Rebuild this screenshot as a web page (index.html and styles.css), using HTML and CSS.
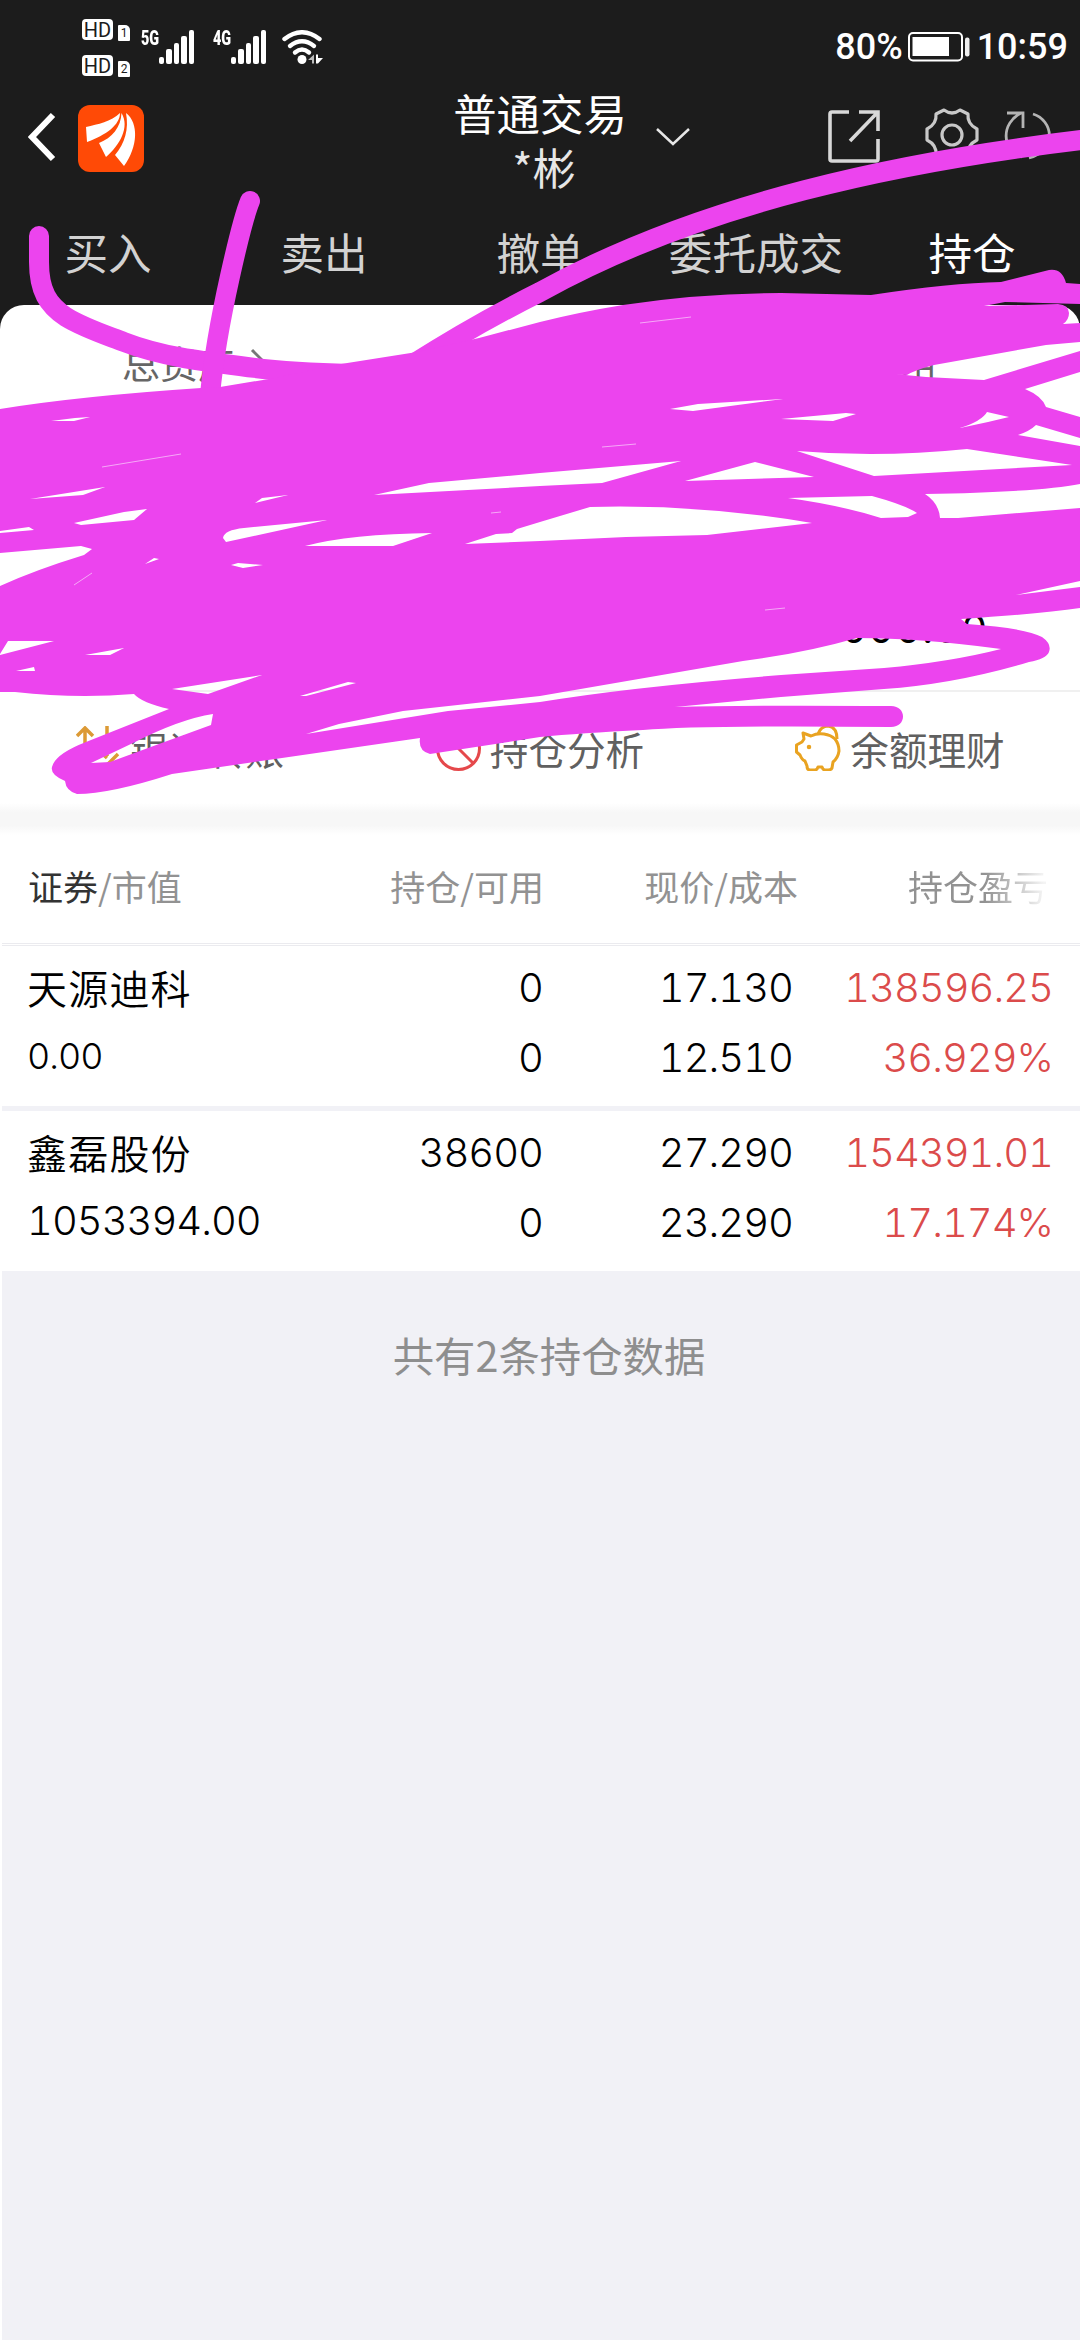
FILE: index.html
```html
<!DOCTYPE html>
<html lang="zh-CN">
<head>
    <meta charset="UTF-8">
    <meta name="viewport" content="width=device-width, initial-scale=1.0">
    <title>普通交易 - 持仓</title>
    <link rel="stylesheet" href="styles.css">
</head>

<body>
    <header class="header">
        <div class="status">
            <div class="hd-group">
                <div class="hd"><span class="hd-box">HD</span><span class="sim">1</span></div>
                <div class="hd"><span class="hd-box">HD</span><span class="sim">2</span></div>
            </div>
            <div class="signal">
                <span class="net">5G</span>
                <svg width="36" height="34" viewBox="0 0 36 34" fill="#fff">
                    <rect x="0" y="27" width="5" height="7" rx="2"/><rect x="7" y="19" width="6" height="15" rx="2"/><rect x="15" y="13" width="5" height="21" rx="2"/><rect x="22" y="6" width="6" height="28" rx="2"/><rect x="30" y="0" width="5" height="34" rx="2"/>
                </svg>
            </div>
            <div class="signal signal-2">
                <span class="net">4G</span>
                <svg width="36" height="34" viewBox="0 0 36 34" fill="#fff">
                    <rect x="0" y="27" width="5" height="7" rx="2"/><rect x="7" y="19" width="6" height="15" rx="2"/><rect x="15" y="13" width="5" height="21" rx="2"/><rect x="22" y="6" width="6" height="28" rx="2"/><rect x="30" y="0" width="5" height="34" rx="2"/>
                </svg>
            </div>
            <svg class="wifi" width="42" height="34" viewBox="0 0 42 34">
                <g fill="none" stroke="#fff" stroke-width="4.4" stroke-linecap="round">
                    <path d="M2.500 9Q20 -4.500 37.500 9"/><path d="M8 16Q20 6.500 32 16"/><path d="M13 22.500Q20 16.500 27 22.500"/>
                </g>
                <circle cx="20" cy="29.500" r="4.500" fill="#fff"/>
                <path d="M26 30L32 24.500V33.500H30V30Z" fill="#bbb"/>
                <path d="M34 24.500V33.500H36L41 28H36V24.500Z" fill="#fff"/>
            </svg>
            <div class="status-right">
                <span>80%</span>
                <svg width="62" height="30" viewBox="0 0 62 30">
                    <rect x="1" y="1" width="53" height="27.500" rx="4" fill="none" stroke="#fff" stroke-width="2"/>
                    <rect x="4.500" y="5" width="36.500" height="19" fill="#fff"/>
                    <rect x="57" y="5.500" width="4.500" height="19" rx="2" fill="#eee"/>
                </svg>
                <span class="time">10:59</span>
            </div>
        </div>

        <div class="titlebar">
            <div class="title-left">
                <svg width="28" height="50" viewBox="0 0 28 50"><path d="M25 3L4 25L25 47" fill="none" stroke="#fff" stroke-width="6"/></svg>
                <svg class="logo" width="66" height="67" viewBox="0 0 66 67">
                    <rect width="66" height="67" rx="12" fill="#ff4a06"/>
                    <g fill="#fff">
                        <path d="M8 22C20 19 33 17 42 8C42 20 28 30 9 37Z"/>
                        <path d="M21 38C34 33 43 22 43.500 8C52 22 42 40 28 52Z"/>
                        <path d="M37 50C47 38 51 24 48 8C61 18 60 42 46 61Z"/>
                    </g>
                </svg>
            </div>
            <div class="title">
                <p>普通交易</p>
                <p class="user">*彬</p>
            </div>
            <div class="title-right">
                <svg class="down" width="34" height="20" viewBox="0 0 34 20"><path d="M1 2L17 17L33 2" fill="none" stroke="#e6e6e6" stroke-width="2.500"/></svg>
                <svg class="share" width="52" height="53" viewBox="0 0 52 53" fill="none" stroke="#d8d8d8" stroke-width="3.600">
                    <path d="M21 2H4Q2 2 2 4V49Q2 51 4 51H48Q50 51 50 49V29"/><path d="M31 2H50V21M49 3L22 31"/>
                </svg>
                <svg class="gear" width="54" height="54" viewBox="0 0 54 54" fill="none" stroke="#c8c8c8" stroke-width="3.200" stroke-linejoin="round">
                    <circle cx="27" cy="27" r="10"/>
                    <path d="M19 2Q27 8 35 2L43 6Q42 16 52 21V32Q42 37 43 47L35 52Q27 46 19 52L11 47Q12 37 2 32V21Q12 16 11 6Z"/>
                </svg>
                <svg class="refresh" width="50" height="50" viewBox="0 0 50 50" fill="none" stroke="#b4b4b4" stroke-width="2.800">
                    <path d="M17 3C-3 13 -3 40 18 47M3 3H19V18"/><path d="M29 4C49 10 54 40 25 48"/>
                </svg>
            </div>
        </div>

        <nav class="tabs">
            <span>买入</span><span>卖出</span><span>撤单</span><span>委托成交</span><span class="active">持仓</span>
        </nav>
    </header>

    <section class="card-wrap">
        <div class="card">
            <div class="asset asset-top">
                <div class="asset-item">
                    <p>总资产<svg width="16" height="28" viewBox="0 0 16 28"><path d="M2 2L14 14L2 26" fill="none" stroke="#777" stroke-width="3"/></svg></p>
                </div>
                <div class="asset-item right"><p>可用</p></div>
            </div>
            <div class="asset asset-bottom">
                <div class="asset-item right"><b>000.00</b></div>
            </div>
        </div>
        <div class="actions">
            <div class="action">
                <svg width="45" height="45" viewBox="0 0 45 45" fill="none" stroke="#dc9a35" stroke-width="3.500"><path d="M9 42V2M1 10L9 2L17 10M31 0V30M22 24L31 32M42 28L31 39"/></svg>
                <span>银证转账</span>
            </div>
            <div class="action">
                <svg width="45" height="45" viewBox="0 0 45 45" fill="none" stroke="#e5484b" stroke-width="3"><circle cx="22.500" cy="22.500" r="21"/><path d="M8 8L37 37"/></svg>
                <span>持仓分析</span>
            </div>
            <div class="action">
                <svg width="46" height="46" viewBox="0 0 46 46" fill="none" stroke="#e9a321" stroke-width="3" stroke-linejoin="round">
                    <path d="M8 8L16 11Q22 8 29 9Q36 10 40 14Q44 19 44 26Q43 33 38 37L37 43Q36 45 33 45H30Q28 45 27 42H23Q22 45 20 45H15Q12 45 12 41L10 36Q7 35 5 30L1.500 27V20L7 17L9 14Z"/>
                    <path d="M23 9Q26 1 33 1Q42 2 42 14"/>
                    <circle cx="14" cy="22" r="1.500" fill="#e9a321" stroke-width="1.500"/>
                </svg>
                <span>余额理财</span>
            </div>
        </div>
    </section>
    <div class="band"></div>

    <main class="table">
        <div class="row head">
            <span class="c1"><em>证券</em>/市值</span><span class="c2">持仓/可用</span><span class="c3">现价/成本</span><span class="c4"><i>持仓盈亏</i></span>
        </div>
        <div class="row">
            <div class="c1"><p class="name">天源迪科</p><p class="small">0.00</p></div>
            <div class="c2"><p>0</p><p>0</p></div>
            <div class="c3"><p>17.130</p><p>12.510</p></div>
            <div class="c4 up"><p>138596.25</p><p>36.929%</p></div>
        </div>
        <div class="row">
            <div class="c1"><p class="name">鑫磊股份</p><p>1053394.00</p></div>
            <div class="c2"><p>38600</p><p>0</p></div>
            <div class="c3"><p>27.290</p><p>23.290</p></div>
            <div class="c4 up"><p>154391.01</p><p>17.174%</p></div>
        </div>
    </main>
    <footer class="total">共有2条持仓数据</footer>

    <!-- marker strokes over the asset card -->
    <svg class="scribble" width="1080" height="820" viewBox="0 0 1080 820">
        <g class="stroke">
            <path d="M39 236V262C39 291 48 305 66 317C84 328 103 334 124 342C160 356 200 361 240 366C275 371 310 373 350 374"/>
            <path d="M250 201C243 218 217 320 210 395"/>
            <path d="M410 366C460 334 500 312 540 292C700 203 900 161 1090 139"/>
        </g>
        <path class="fill" d="M0 409Q80 396 201 388L220 387L269 379L341 364L417 352L479 338L540 322Q580 312 623 305Q700 293 781 293L871 295Q950 283 1001 282L1049 270Q1062 268 1066 283L1080 284V304L1005 302L984 306L1058 304Q1069 305 1069 313Q1069 320 1063 324L1080 323V342L1046 345L934 365Q915 370 907 375L895 374L926 377L984 380L1080 351V372L1025 389Q1042 396 1046 407L1080 417V438L1036 425Q1030 431 1018 435L1080 446V484Q1040 492 925 494Q939 503 940 518H958L1080 508V581L1016 595L1080 587V608Q1040 614 961 619L967 624Q1025 628 1042 637Q1052 644 1049 652Q1046 659 1029 662Q955 684 884 689L781 697L675 707Q740 705 891 706C907 706 907 727 891 727Q700 725 643 730Q580 733 540 737L430 754Q418 751 420 738L282 758L172 774Q110 794 77 794Q66 791 65 781Q50 775 52 767Q55 754 86 742L169 709Q142 703 134 694Q76 699 15 692H0V655L54 641H8L0 654V586Q35 570 84 555L92 549L81 546L0 553V533L34 530L29 527L0 531Z
            M51 421L75 418L90 417L74 421Z M30 499L105 487L83 495Z M74 523L124 512L147 509L134 520L81 525Z M255 503L262 498L288 495Z
            M223 538Q224 530 244 528L327 520L226 542Z M145 564L154 558L159 559Z M231 565L238 563L263 565L243 568Z
            M305 546Q350 534 432 533L393 546Z M374 495L429 483L540 473L681 461L602 483L540 486Z M685 481L755 462L814 477Z
            M670 409L698 404L783 399L693 411Z M781 419L846 413L856 414L833 421Z M960 428Q982 421 987 412L1009 417L988 422Z
            M797 451Q880 458 967 449L1072 465L874 476Z M788 498L872 496Q905 505 917 513L908 517L881 518Q840 505 788 498Z
            M465 544L496 534L512 533L517 529L540 522L590 507Q700 504 812 523L707 535L626 537L540 541Z
            M85 655L124 648L110 655Z M16 671L34 667L35 671Z M172 689L262 675L208 694Z M300 696L348 682L356 683L306 696Z
            M306 734L339 724L403 711L540 696L743 661Q805 653 857 638Q920 638 1001 649Q950 662 884 668L781 675Q630 687 540 702L448 711Z
            M91 763L133 743Q180 719 213 714L211 725L148 748L110 762Z"/>
        <path class="hairline" d="M102 467L181 454M74 585L92 573M602 447L636 444M640 323L691 317M491 513L501 512M765 610L785 608"/>
    </svg>
</body>
</html>
```

FILE: styles.css
```css
* {
    margin: 0;
    padding: 0;
    box-sizing: border-box;
}

body {
    width: 1080px;
    height: 2340px;
    position: relative;
    background: linear-gradient(90deg, #fff 2px, #f1f1f6 2px);
    font-family: "Noto Sans CJK SC", sans-serif;
}

svg {
    display: block;
    flex-shrink: 0;
}

.header {
    height: 305px;
    background-color: #1c1c1c;
    color: #fff;
}

/* status bar */
.status {
    height: 94px;
    display: flex;
    align-items: flex-start;
    padding: 0 12px 0 82px;
    font-family: Roboto, sans-serif;
}

.hd-group {
    display: flex;
    flex-direction: column;
    gap: 14px;
    padding-top: 19px;
}

.hd {
    display: flex;
    gap: 5px;
    height: 22px;
    align-items: flex-end;
    color: #1c1c1c;
}

.hd-box {
    width: 31px;
    height: 21px;
    margin-bottom: 1px;
    border-radius: 4px;
    background-color: #fff;
    font: 20px/22px Roboto, sans-serif;
    text-align: center;
}

.sim {
    width: 12px;
    height: 16px;
    background-color: #fff;
    border-radius: 1px 5px 1px 1px;
    font: 12px/17px Roboto, sans-serif;
    text-align: center;
}

.signal {
    display: flex;
    margin: 30px 0 0 11px;
}

.signal-2 {
    margin-left: 18px;
}

.net {
    width: 18px;
    font-size: 20px;
    font-weight: 900;
    line-height: 16px;
    white-space: nowrap;
    transform: scaleX(.72);
    transform-origin: left;
}

.wifi {
    margin: 30px 0 0 15px;
}

.status-right {
    margin-left: auto;
    display: flex;
    align-items: center;
    padding-top: 26px;
    font-size: 36px;
    font-weight: 500;
    line-height: 42px;
}

.status-right svg {
    margin: 0 7px 0 5px;
}

.time {
    letter-spacing: 0;
}

/* title bar */
.titlebar {
    height: 110px;
    display: grid;
    grid-template-columns: 360px 360px 360px;
}

.title-left {
    display: flex;
    padding: 11px 0 0 28px;
}

.title-left svg:first-child {
    margin-top: 7px;
}

.logo {
    margin-left: 22px;
}

.title {
    text-align: center;
    font-size: 43.400px;
    line-height: 54px;
    margin-top: -9px;
}

.user {
    color: #e6e6e6;
    padding-left: 8px;
}

.title-right {
    display: flex;
    margin-left: -64px;
}

.down {
    margin-top: 33px;
}

.share {
    margin: 16px 0 0 138px;
}

.gear {
    margin: 14px 0 0 45px;
}

.refresh {
    margin: 16px 0 0 25px;
}

.tabs {
    display: grid;
    grid-template-columns: repeat(5, 1fr);
    text-align: center;
    font-size: 43.600px;
    line-height: 94px;
    color: #d2d2d2;
}

.tabs .active {
    color: #fff;
}

/* asset card */
.card-wrap {
    background: linear-gradient(#1c1c1c 0 40px, #fff 40px);
}

.card {
    height: 387px;
    background-color: #fff;
    border-radius: 24px 24px 0 0;
    border-bottom: 2px solid #f0f0f0;
}

.asset {
    display: flex;
    justify-content: space-between;
    color: #666;
    font-size: 38px;
    line-height: 54px;
}

.asset-top {
    padding: 30px 143px 0 122px;
}

.asset-top p {
    display: flex;
    align-items: center;
    gap: 14px;
}

.asset-bottom {
    justify-content: flex-end;
    padding: 211px 91px 0 0;
}

.asset b {
    color: #000;
    font-family: Inter, sans-serif;
    font-size: 40px;
    font-weight: 400;
    letter-spacing: 2px;
}

.actions {
    height: 111px;
    display: grid;
    grid-template-columns: repeat(3, 1fr);
    padding-top: 1px;
}

.action {
    display: flex;
    justify-content: center;
    align-items: center;
    gap: 9px;
    color: #606060;
    font-size: 38.600px;
}

.band {
    height: 32px;
    background: linear-gradient(#fff, #f7f7f7 30%, #f7f7f7 70%, #fff);
}

/* holdings table */
.table {
    padding-left: 2px;
    background-color: #fff;
}

.row {
    height: 165px;
    display: grid;
    grid-template-columns: 270px 271px 250px 260px;
    padding-top: 7px;
    background-color: #fff;
    border-bottom: 5px solid #f1f1f6;
    font-family: Inter, "Noto Sans CJK SC", sans-serif;
    font-size: 40px;
    font-weight: 350;
    font-variant-numeric: tabular-nums;
    letter-spacing: -1px;
    line-height: 70px;
}

.row .c1 {
    padding-left: 25px;
    white-space: nowrap;
}

.row .c2,
.row .c3,
.row .c4 {
    text-align: right;
    white-space: nowrap;
}

.row .name {
    font-family: "Noto Sans CJK SC", sans-serif;
    font-size: 40px;
    font-weight: 350;
    letter-spacing: 1.200px;
    line-height: 68px;
}

.row .small {
    font-size: 36px;
    line-height: 70px;
}

.up {
    color: #db4b4b;
}

.head {
    height: 111px;
    padding-top: 16px;
    border-bottom: 3px double #ebebef;
    font-family: "Noto Sans CJK SC", sans-serif;
    font-size: 35px;
    font-weight: 400;
    letter-spacing: 0;
    color: #929292;
}

.head .c1 {
    padding-left: 26px;
}

.head .c2 {
    margin-right: -1px;
}

.head em {
    font-style: normal;
    color: #333;
}

.head .c3 {
    margin-right: -5px;
}

.head i {
    font-style: normal;
    margin-right: 5px;
    background: linear-gradient(90deg, #929292 55%, #f4f4f4 97%);
    -webkit-background-clip: text;
    background-clip: text;
    color: transparent;
}

.total {
    padding: 43px 0 0 18px;
    text-align: center;
    font-size: 41.400px;
    line-height: 70px;
    color: #8e8e8e;
}

/* marker overlay */
.scribble {
    position: absolute;
    left: 0;
    top: 0;
}

.scribble .stroke {
    fill: none;
    stroke: #ec44ee;
    stroke-width: 20;
    stroke-linecap: round;
}

.scribble .fill {
    fill: #ec44ee;
    fill-rule: evenodd;
}

.scribble .hairline {
    fill: none;
    stroke: #f6a8f7;
    stroke-width: 1;
}
```
